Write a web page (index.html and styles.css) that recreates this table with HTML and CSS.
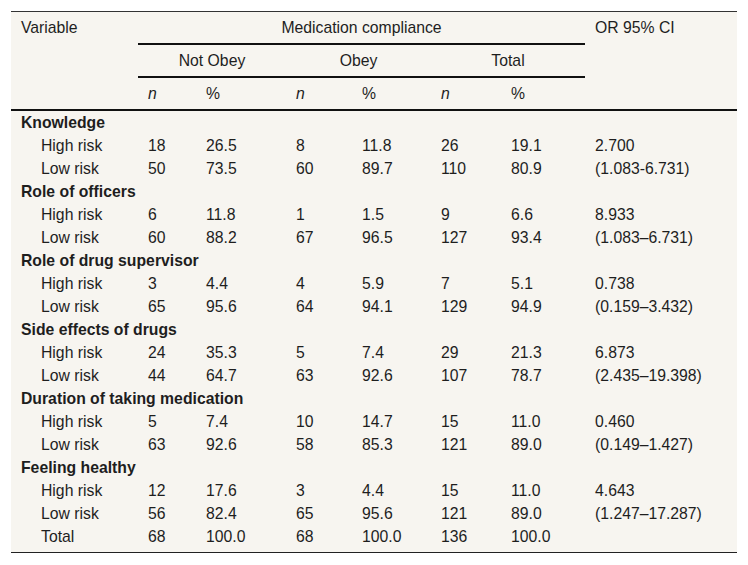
FILE: index.html
```html
<!DOCTYPE html>
<html lang="en">
<head>
<meta charset="utf-8">
<title>Medication compliance</title>
<link rel="stylesheet" href="styles.css">
</head>
<body>
<div class="wrap">
<table class="data">
<colgroup>
<col class="c-var"><col class="c-n1"><col class="c-p1"><col class="c-n2"><col class="c-p2"><col class="c-n3"><col class="c-p3"><col class="c-or">
</colgroup>
<thead>
<tr>
<th class="hd top rule" rowspan="3">Variable</th>
<th class="hd center rule-thin" colspan="6">Medication compliance</th>
<th class="hd top rule" rowspan="3">OR 95% CI</th>
</tr>
<tr>
<th class="hd center rule-thin" colspan="2">Not Obey</th>
<th class="hd center rule-thin" colspan="2">Obey</th>
<th class="hd center rule-thin" colspan="2">Total</th>
</tr>
<tr>
<th class="hd rule"><i>n</i></th><th class="hd rule">%</th>
<th class="hd rule"><i>n</i></th><th class="hd rule">%</th>
<th class="hd rule"><i>n</i></th><th class="hd rule">%</th>
</tr>
</thead>
<tbody>
<tr><td class="grp" colspan="8">Knowledge</td></tr>
<tr><td class="sub">High risk</td><td>18</td><td>26.5</td><td>8</td><td>11.8</td><td>26</td><td>19.1</td><td>2.700</td></tr>
<tr><td class="sub">Low risk</td><td>50</td><td>73.5</td><td>60</td><td>89.7</td><td>110</td><td>80.9</td><td>(1.083-6.731)</td></tr>
<tr><td class="grp" colspan="8">Role of officers</td></tr>
<tr><td class="sub">High risk</td><td>6</td><td>11.8</td><td>1</td><td>1.5</td><td>9</td><td>6.6</td><td>8.933</td></tr>
<tr><td class="sub">Low risk</td><td>60</td><td>88.2</td><td>67</td><td>96.5</td><td>127</td><td>93.4</td><td>(1.083–6.731)</td></tr>
<tr><td class="grp" colspan="8">Role of drug supervisor</td></tr>
<tr><td class="sub">High risk</td><td>3</td><td>4.4</td><td>4</td><td>5.9</td><td>7</td><td>5.1</td><td>0.738</td></tr>
<tr><td class="sub">Low risk</td><td>65</td><td>95.6</td><td>64</td><td>94.1</td><td>129</td><td>94.9</td><td>(0.159–3.432)</td></tr>
<tr><td class="grp" colspan="8">Side effects of drugs</td></tr>
<tr><td class="sub">High risk</td><td>24</td><td>35.3</td><td>5</td><td>7.4</td><td>29</td><td>21.3</td><td>6.873</td></tr>
<tr><td class="sub">Low risk</td><td>44</td><td>64.7</td><td>63</td><td>92.6</td><td>107</td><td>78.7</td><td>(2.435–19.398)</td></tr>
<tr><td class="grp" colspan="8">Duration of taking medication</td></tr>
<tr><td class="sub">High risk</td><td>5</td><td>7.4</td><td>10</td><td>14.7</td><td>15</td><td>11.0</td><td>0.460</td></tr>
<tr><td class="sub">Low risk</td><td>63</td><td>92.6</td><td>58</td><td>85.3</td><td>121</td><td>89.0</td><td>(0.149–1.427)</td></tr>
<tr><td class="grp" colspan="8">Feeling healthy</td></tr>
<tr><td class="sub">High risk</td><td>12</td><td>17.6</td><td>3</td><td>4.4</td><td>15</td><td>11.0</td><td>4.643</td></tr>
<tr><td class="sub">Low risk</td><td>56</td><td>82.4</td><td>65</td><td>95.6</td><td>121</td><td>89.0</td><td>(1.247–17.287)</td></tr>
<tr><td class="sub">Total</td><td>68</td><td>100.0</td><td>68</td><td>100.0</td><td>136</td><td>100.0</td><td></td></tr>
</tbody>
</table>
</div>
</body>
</html>
```
FILE: styles.css
```css
html, body {
  margin: 0;
  padding: 0;
  background: #ffffff;
}
body {
  font-family: "Liberation Sans", Arial, sans-serif;
  font-size: 15.75px;
  color: #1e1e1e;
}
.wrap {
  margin: 11px;
  width: 726px;
  background: #f7f5f0;
  border-top: 1px solid #333333;
  border-bottom: 1px solid #222222;
  padding-bottom: 4px;
}
.data {
  width: 726px;
  table-layout: fixed;
  border-collapse: separate;
  border-spacing: 0;
}
.c-var { width: 127px; }
.c-n1 { width: 58px; }
.c-p1 { width: 90px; }
.c-n2 { width: 66px; }
.c-p2 { width: 79px; }
.c-n3 { width: 70px; }
.c-p3 { width: 84px; }
.c-or { width: 152px; }

.data th,
.data td {
  padding: 0 0 0 10px;
  text-align: left;
  font-weight: normal;
  line-height: 23px;
  white-space: nowrap;
  vertical-align: top;
}
.data th.hd {
  padding-top: 4px;
  padding-bottom: 4px;
}
.data th.center {
  text-align: center;
  padding-left: 0;
}
.data th.rule,
.data th.rule-thin {
  border-bottom: 2px solid #111111;
}
.data th i {
  font-style: italic;
}
.data td.grp {
  font-weight: bold;
}
.data td.sub {
  padding-left: 30px;
}
```
